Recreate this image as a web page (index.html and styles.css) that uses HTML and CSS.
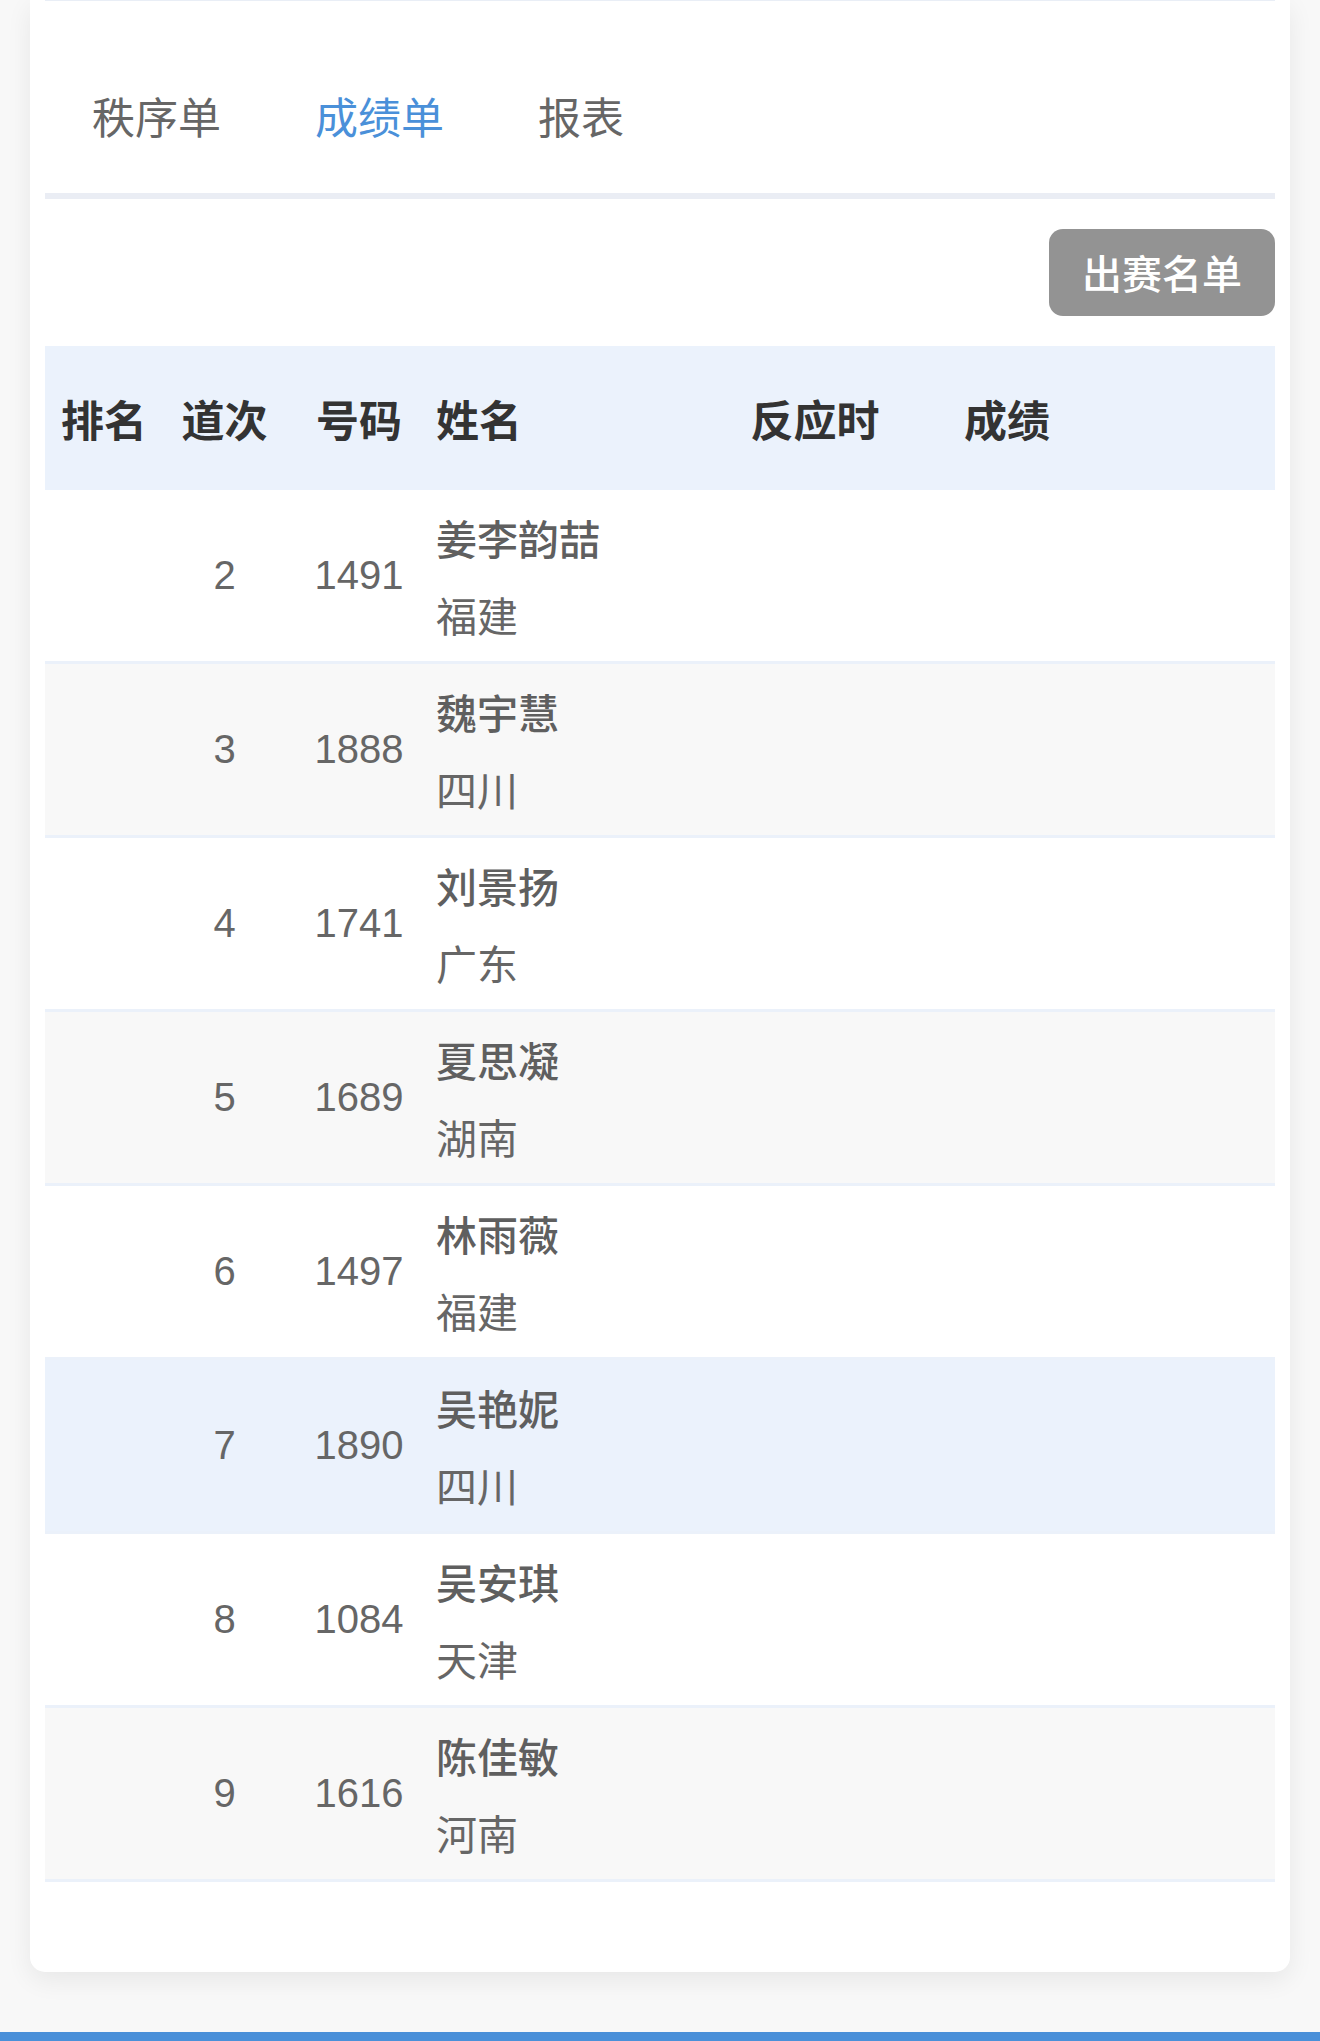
FILE: index.html
```html
<!DOCTYPE html>
<html lang="zh-CN">
<head>
<meta charset="utf-8">
<title>成绩单</title>
<link rel="stylesheet" href="styles.css">
</head>
<body>
<div class="card">
  <div class="top-line"></div>
  <div class="tabs">
    <div class="tab">秩序单</div>
    <div class="tab active">成绩单</div>
    <div class="tab">报表</div>
  </div>
  <div class="actions">
    <button class="btn">出赛名单</button>
  </div>
  <div class="table">
    <div class="row head">
      <div class="c c-rank">排名</div>
      <div class="c c-lane">道次</div>
      <div class="c c-bib">号码</div>
      <div class="c c-name">姓名</div>
      <div class="c c-rt">反应时</div>
      <div class="c c-res">成绩</div>
      <div class="c"></div>
    </div>
    <div class="row">
      <div class="c c-rank"></div><div class="c c-lane num">2</div><div class="c c-bib num">1491</div>
      <div class="c c-name"><div class="nm">姜李韵喆</div><div class="pv">福建</div></div>
      <div class="c c-rt"></div><div class="c c-res"></div><div class="c"></div>
    </div>
    <div class="row alt">
      <div class="c c-rank"></div><div class="c c-lane num">3</div><div class="c c-bib num">1888</div>
      <div class="c c-name"><div class="nm">魏宇慧</div><div class="pv">四川</div></div>
      <div class="c c-rt"></div><div class="c c-res"></div><div class="c"></div>
    </div>
    <div class="row">
      <div class="c c-rank"></div><div class="c c-lane num">4</div><div class="c c-bib num">1741</div>
      <div class="c c-name"><div class="nm">刘景扬</div><div class="pv">广东</div></div>
      <div class="c c-rt"></div><div class="c c-res"></div><div class="c"></div>
    </div>
    <div class="row alt">
      <div class="c c-rank"></div><div class="c c-lane num">5</div><div class="c c-bib num">1689</div>
      <div class="c c-name"><div class="nm">夏思凝</div><div class="pv">湖南</div></div>
      <div class="c c-rt"></div><div class="c c-res"></div><div class="c"></div>
    </div>
    <div class="row">
      <div class="c c-rank"></div><div class="c c-lane num">6</div><div class="c c-bib num">1497</div>
      <div class="c c-name"><div class="nm">林雨薇</div><div class="pv">福建</div></div>
      <div class="c c-rt"></div><div class="c c-res"></div><div class="c"></div>
    </div>
    <div class="row hl">
      <div class="c c-rank"></div><div class="c c-lane num">7</div><div class="c c-bib num">1890</div>
      <div class="c c-name"><div class="nm">吴艳妮</div><div class="pv">四川</div></div>
      <div class="c c-rt"></div><div class="c c-res"></div><div class="c"></div>
    </div>
    <div class="row">
      <div class="c c-rank"></div><div class="c c-lane num">8</div><div class="c c-bib num">1084</div>
      <div class="c c-name"><div class="nm">吴安琪</div><div class="pv">天津</div></div>
      <div class="c c-rt"></div><div class="c c-res"></div><div class="c"></div>
    </div>
    <div class="row alt">
      <div class="c c-rank"></div><div class="c c-lane num">9</div><div class="c c-bib num">1616</div>
      <div class="c c-name"><div class="nm">陈佳敏</div><div class="pv">河南</div></div>
      <div class="c c-rt"></div><div class="c c-res"></div><div class="c"></div>
    </div>
  </div>
</div>
<div class="footer-bar"></div>
</body>
</html>
```

FILE: styles.css
```css
html, body {
  margin: 0;
  padding: 0;
}
body {
  background: #f8f8f8;
  font-family: "Liberation Sans", "Noto Sans CJK SC", sans-serif;
  overflow: hidden;
}
.card {
  margin: 0 30px;
  padding: 0 15px 90px;
  background: #ffffff;
  border-radius: 0 0 15px 15px;
  box-shadow: 0 8px 26px rgba(0, 0, 0, 0.07);
}
.top-line {
  height: 1px;
  background: #e9eef6;
}
.tabs {
  display: flex;
  height: 192px;
  border-bottom: 6px solid #eaedf4;
}
.tab {
  padding: 85px 47px 0;
  font-family: "Noto Sans CJK SC", sans-serif;
  font-size: 43px;
  line-height: 58px;
  color: #666666;
}
.tab.active {
  color: #4a90d9;
}
.actions {
  display: flex;
  justify-content: flex-end;
  margin-top: 30px;
}
.btn {
  height: 87px;
  padding: 0 33px;
  border: none;
  border-radius: 14px;
  background: #939393;
  color: #ffffff;
  font-family: "Noto Sans CJK SC", sans-serif;
  font-weight: 500;
  font-size: 40px;
  line-height: 87px;
}
.table {
  margin-top: 30px;
}
.row {
  display: grid;
  grid-template-columns: 118px 123px 146px 278px 210px 174px 1fr;
  height: 171px;
  align-items: center;
  background: #ffffff;
  border-bottom: 3px solid #ebf1fa;
}
.row.alt {
  background: #f8f8f8;
}
.row.hl {
  background: #ebf2fc;
}
.row.head {
  height: 144px;
  background: #ebf2fc;
  border-bottom: none;
}
.head .c {
  font-family: "Noto Sans CJK SC", sans-serif;
  font-weight: 700;
  font-size: 43px;
  color: #333333;
}
.c {
  text-align: center;
}
.c.c-name {
  text-align: left;
  padding-left: 4px;
}
.num {
  font-size: 40px;
  color: #666666;
}
.nm, .pv {
  font-family: "Noto Sans CJK SC", sans-serif;
  font-size: 41px;
  line-height: 77px;
  color: #666666;
}
.nm {
  font-weight: 500;
  color: #5f5f5f;
}
.footer-bar {
  margin-top: 60px;
  height: 100px;
  background: #4a90d9;
}
```
